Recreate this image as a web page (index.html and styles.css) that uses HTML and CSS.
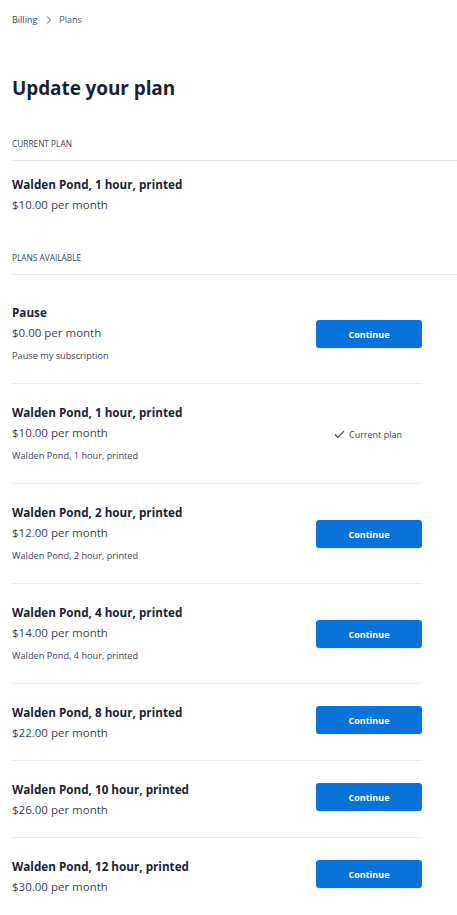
FILE: index.html
```html
<!DOCTYPE html>
<html lang="en">
<head>
<meta charset="utf-8">
<title>Update your plan</title>
<link rel="stylesheet" href="styles.css">
</head>
<body>
<div class="page">
  <nav class="crumbs">
    <span class="crumb">Billing</span>
    <svg class="chev" width="8" height="10" viewBox="0 0 8 10"><path d="M2 1.5 L5.5 5 L2 8.5" fill="none" stroke="#4f566b" stroke-width="1"/></svg>
    <span class="crumb current">Plans</span>
  </nav>

  <h1 class="title">Update your plan</h1>

  <section class="section current-section">
    <div class="section-label">CURRENT PLAN</div>
    <div class="current-plan">
      <div class="plan-name">Walden Pond, 1 hour, printed</div>
      <div class="plan-price">$10.00 per month</div>
    </div>
  </section>

  <section class="section">
    <div class="section-label">PLANS AVAILABLE</div>
    <ul class="plans">
      <li class="plan">
        <div class="plan-info">
          <div class="plan-name">Pause</div>
          <div class="plan-price">$0.00 per month</div>
          <div class="plan-desc">Pause my subscription</div>
        </div>
        <button class="btn">Continue</button>
      </li>
      <li class="plan">
        <div class="plan-info">
          <div class="plan-name">Walden Pond, 1 hour, printed</div>
          <div class="plan-price">$10.00 per month</div>
          <div class="plan-desc">Walden Pond, 1 hour, printed</div>
        </div>
        <div class="current-tag">
          <svg width="11" height="9" viewBox="0 0 11 9"><path d="M1 4.5 L4 7.5 L10 1.2" fill="none" stroke="#3c4257" stroke-width="1.1"/></svg>
          <span>Current plan</span>
        </div>
      </li>
      <li class="plan">
        <div class="plan-info">
          <div class="plan-name">Walden Pond, 2 hour, printed</div>
          <div class="plan-price">$12.00 per month</div>
          <div class="plan-desc">Walden Pond, 2 hour, printed</div>
        </div>
        <button class="btn">Continue</button>
      </li>
      <li class="plan">
        <div class="plan-info">
          <div class="plan-name">Walden Pond, 4 hour, printed</div>
          <div class="plan-price">$14.00 per month</div>
          <div class="plan-desc">Walden Pond, 4 hour, printed</div>
        </div>
        <button class="btn">Continue</button>
      </li>
      <li class="plan plan-compact">
        <div class="plan-info">
          <div class="plan-name">Walden Pond, 8 hour, printed</div>
          <div class="plan-price">$22.00 per month</div>
        </div>
        <button class="btn">Continue</button>
      </li>
      <li class="plan plan-compact">
        <div class="plan-info">
          <div class="plan-name">Walden Pond, 10 hour, printed</div>
          <div class="plan-price">$26.00 per month</div>
        </div>
        <button class="btn">Continue</button>
      </li>
      <li class="plan plan-compact">
        <div class="plan-info">
          <div class="plan-name">Walden Pond, 12 hour, printed</div>
          <div class="plan-price">$30.00 per month</div>
        </div>
        <button class="btn">Continue</button>
      </li>
    </ul>
  </section>
</div>
</body>
</html>
```

FILE: styles.css
```css
* { box-sizing: border-box; }

html, body {
  margin: 0;
  padding: 0;
  background: #ffffff;
}

body {
  font-family: "Open Sans", "Noto Sans", "Liberation Sans", sans-serif;
  color: #1a1f36;
}

.page {
  padding: 12px 0 0 12px;
}

.crumbs {
  display: flex;
  align-items: center;
  height: 16px;
  font-size: 9px;
  color: #3c4257;
}

.crumb { line-height: 16px; }
.crumb.current { color: #4f566b; }

.chev {
  margin: 0 6px 0 8px;
}

.title {
  margin: 46px 0 0 0;
  font-size: 19px;
  line-height: 28px;
  font-weight: 700;
  color: #1a1f36;
  letter-spacing: -0.1px;
}

.section-label {
  font-size: 8.3px;
  line-height: 12px;
  color: #3c4257;
  padding-bottom: 10px;
  border-bottom: 1px solid #e8e9ed;
}

.current-section {
  margin-top: 36px;
}

.current-section + .section {
  margin-top: 37px;
}

.current-plan {
  padding-top: 13px;
}

.plan-name {
  font-size: 11.7px;
  line-height: 20px;
  font-weight: 700;
  color: #1a1f36;
}

.plan-price {
  font-size: 11.5px;
  line-height: 21px;
  color: #3c4257;
}

.plan-desc {
  font-size: 9.2px;
  line-height: 14px;
  margin: 6px 0 3px 0;
  color: #3c4257;
}

.plans {
  list-style: none;
  margin: 9px 0 0 0;
  padding: 0;
  width: 410px;
}

.plan {
  display: flex;
  align-items: center;
  justify-content: space-between;
  padding: 18px 0 17px 0;
  border-bottom: 1px solid #ebebef;
}

.plan:last-child { border-bottom: none; }

.btn {
  width: 106px;
  height: 28px;
  border: none;
  border-radius: 3px;
  background: #0a73d9;
  color: #ffffff;
  font-family: inherit;
  font-size: 9px;
  font-weight: 700;
  cursor: pointer;
  box-shadow: 0 1px 1px rgba(0, 0, 0, 0.08);
}

.plan-compact .btn {
  margin-bottom: 5px;
}

.current-tag {
  display: flex;
  align-items: center;
  gap: 4px;
  width: 88px;
  font-size: 9px;
  color: #3c4257;
}
```
